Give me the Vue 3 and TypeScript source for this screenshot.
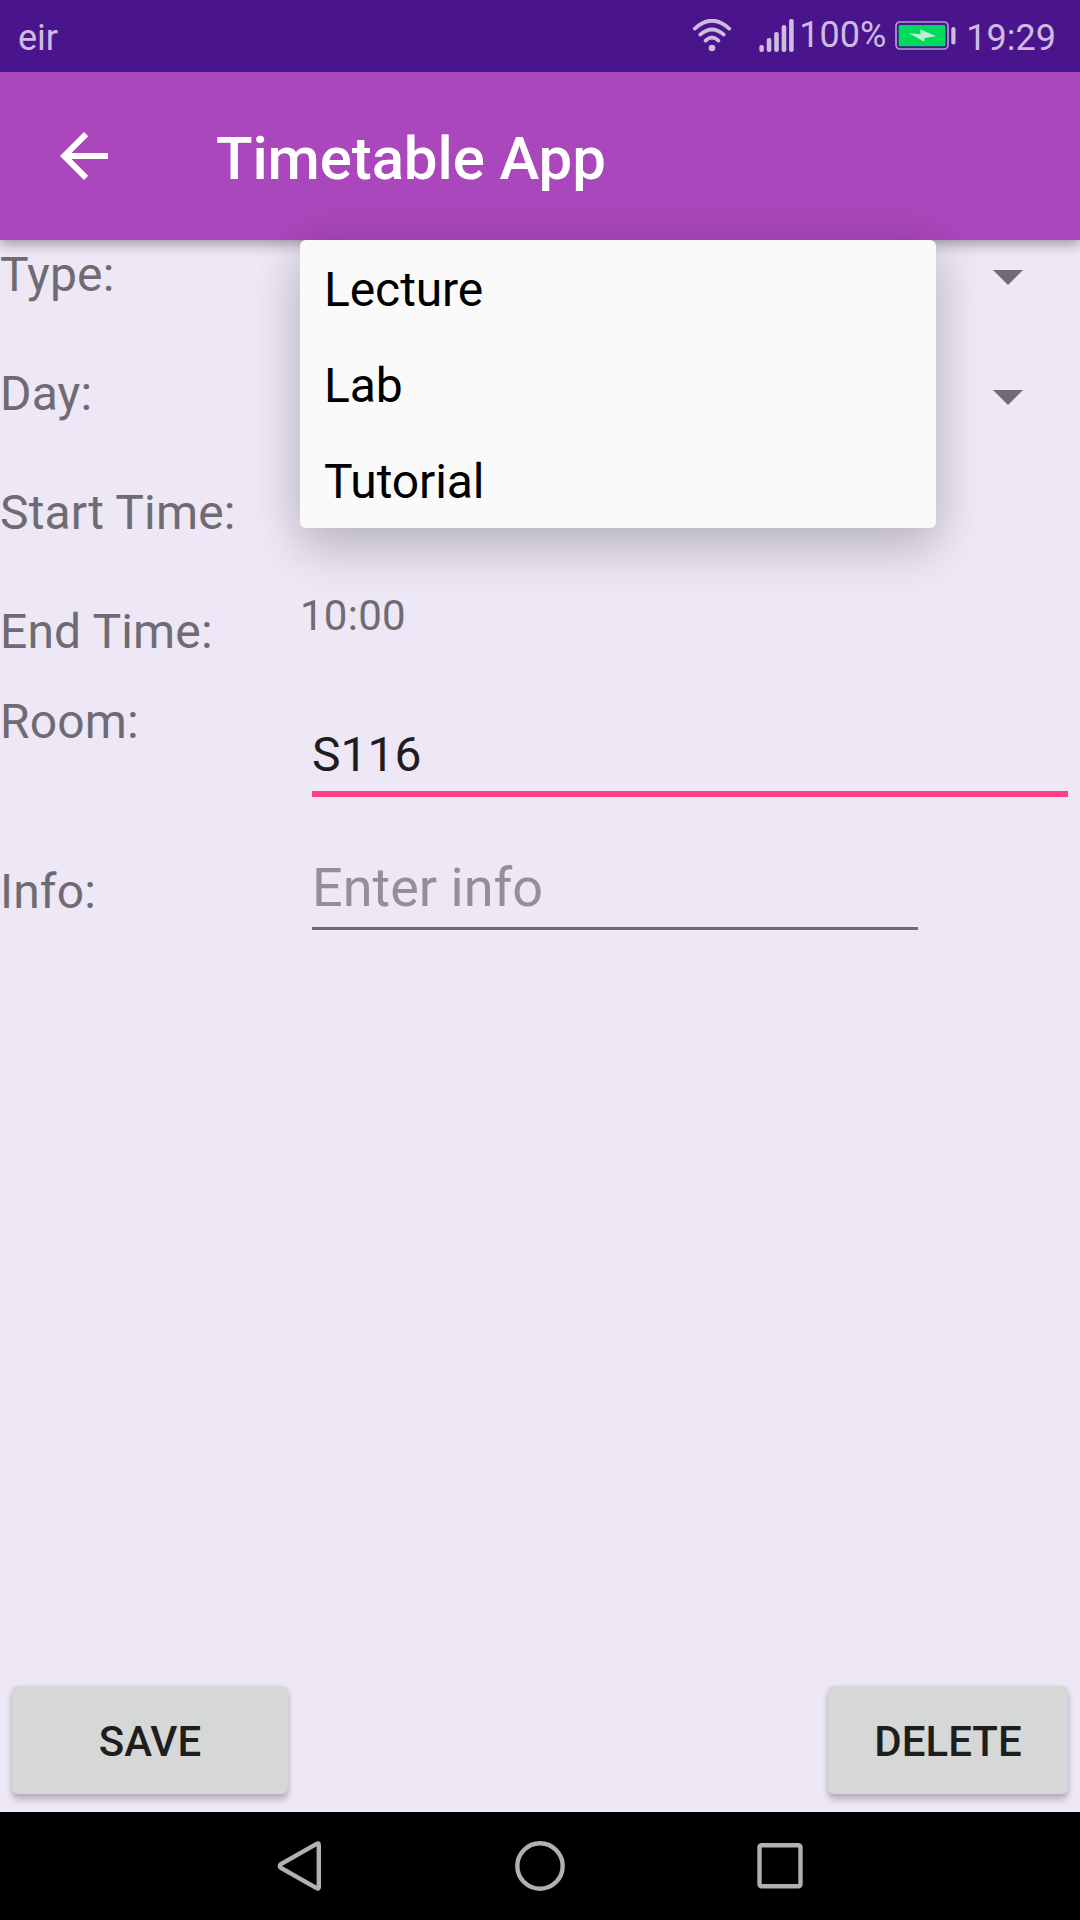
<script setup lang="ts">
import { ref } from 'vue'

interface Field {
  label: string
  height: number
}

const fields: Field[] = [
  { label: 'Type:', height: 119 },
  { label: 'Day:', height: 119 },
  { label: 'Start Time:', height: 119 },
  { label: 'End Time:', height: 90 },
  { label: 'Room:', height: 170 },
  { label: 'Info:', height: 56 },
]

const types: string[] = ['Lecture', 'Lab', 'Tutorial']
const signalBars: number[] = [7, 14, 20, 27, 33]
const menuOpen = ref(true)
const room = ref('S116')
const info = ref('')
</script>

<template>
  <div class="screen">
    <header class="status">
      <span class="carrier">eir</span>
      <div class="indicators">
        <svg class="wifi" width="40" height="34" viewBox="0 0 40 34" fill="none" stroke="currentColor" stroke-width="3.8" stroke-linecap="round">
          <path d="M2.8 9.6Q20 -6.2 37.2 9.6" />
          <path d="M8.2 15.6Q20 5.2 31.8 15.6" />
          <path d="M13.6 21.6Q20 15.6 26.4 21.6" />
          <circle cx="20" cy="29" r="3.3" fill="currentColor" stroke="none" />
        </svg>
        <svg class="signal" width="35" height="33" viewBox="0 0 35 33" fill="currentColor">
          <rect v-for="(h, i) in signalBars" :key="h" :x="i * 7.45 + 0.3" :y="33 - h" width="4.6" :height="h" rx="2" />
        </svg>
        <span class="percent">100%</span>
        <svg class="battery" width="62" height="30" viewBox="0 0 62 30">
          <rect x="1" y="1" width="52" height="27" rx="4" fill="none" stroke="#b09ad0" stroke-width="1.7" />
          <rect x="3.7" y="3.9" width="46.8" height="21.4" rx="1.5" fill="#00db5b" />
          <path d="M14 12.2L25.6 13.2L25.2 8.2L41 15.2L29.8 16.9L29.2 20.8Z" fill="#b9f4cf" />
          <rect x="56.3" y="6" width="4.2" height="17.5" rx="2" fill="#cdbce0" />
        </svg>
        <span class="clock">19:29</span>
      </div>
    </header>

    <div class="toolbar">
      <svg class="back" width="72" height="72" viewBox="0 0 24 24" fill="#fff">
        <path d="M20 11H7.83l5.59-5.59L12 4l-8 8 8 8 1.41-1.41L7.83 13H20v-2z" />
      </svg>
      <h1>Timetable App</h1>
    </div>

    <main class="content">
      <div class="labels">
        <div v-for="f in fields" :key="f.label" :style="{ height: f.height + 'px' }">{{ f.label }}</div>
      </div>
      <div class="values">
        <div class="spinner"><i class="arrow"></i></div>
        <div class="spinner"><i class="arrow"></i></div>
        <div class="time">10:00</div>
        <input v-model="room" class="room" type="text" />
        <input v-model="info" class="info" type="text" placeholder="Enter info" />
      </div>
      <ul v-if="menuOpen" class="menu">
        <li v-for="t in types" :key="t">{{ t }}</li>
      </ul>
    </main>

    <div class="actions">
      <button class="save">SAVE</button>
      <button class="delete">DELETE</button>
    </div>

    <nav class="navbar">
      <svg width="50" height="54" viewBox="0 0 50 54"><path d="M41.6 4.9Q43.8 3.6 43.8 6V48Q43.8 50.4 41.6 49.1L6 29Q3.6 27 6 25Z" /></svg>
      <svg width="54" height="54" viewBox="0 0 54 54"><circle cx="27" cy="27" r="22.7" /></svg>
      <svg width="50" height="54" viewBox="0 0 50 54"><rect x="4.5" y="6.3" width="41" height="41" rx="2" /></svg>
    </nav>
  </div>
</template>

<style>
body {
  margin: 0;
}
</style>

<style scoped>
.screen {
  width: 1080px;
  height: 1920px;
  display: flex;
  flex-direction: column;
  overflow: hidden;
  background: #ede7f6;
  font-family: Roboto, "Liberation Sans", sans-serif;
}
.status {
  position: relative;
  z-index: 1;
  height: 72px;
  flex: none;
  display: flex;
  justify-content: space-between;
  background: #4a148c;
  color: #cdbce0;
  font-size: 36px;
  line-height: 42px;
}
.carrier {
  margin: 17px 0 0 18px;
}
.indicators {
  display: flex;
  align-items: flex-start;
  margin-right: 24px;
}
.wifi {
  margin: 19px 27px 0 0;
}
.signal {
  margin: 19px 5px 0 0;
}
.percent {
  margin: 14px 9px 0 0;
  width: 87px;
}
.battery {
  margin: 21px 9px 0 0;
}
.clock {
  margin-top: 17px;
}
.toolbar {
  position: relative;
  height: 168px;
  flex: none;
  display: flex;
  align-items: center;
  background: #ab47bc;
  box-shadow: 0 5px 12px rgba(0, 0, 0, 0.3), 0 0 4px rgba(0, 0, 0, 0.08);
}
.back {
  margin-left: 48px;
}
h1 {
  margin: 5px 0 0 96px;
  color: #fff;
  font-size: 60px;
  font-weight: 500;
  line-height: 70px;
  letter-spacing: -0.12px;
}
.content {
  position: relative;
  flex: 1;
  display: flex;
}
.labels {
  width: 300px;
  padding-top: 7px;
  color: #6f6b73;
  font-size: 48px;
  line-height: 56px;
  letter-spacing: 0.15px;
}
.values {
  flex: 1;
  display: flex;
  flex-direction: column;
  align-items: flex-start;
}
.spinner {
  width: 100%;
  height: 120px;
  display: flex;
  justify-content: flex-end;
}
.arrow {
  width: 30px;
  height: 15px;
  margin: 30px 57px 0 0;
  background: #6f6b73;
  clip-path: polygon(0 0, 100% 0, 50% 100%);
}
.time {
  margin-top: 111px;
  height: 49px;
  color: #6f6b73;
  font-size: 42px;
  line-height: 49px;
  letter-spacing: 0.25px;
}
input {
  display: block;
  box-sizing: border-box;
  margin: 0 0 0 12px;
  padding: 0;
  border: 0;
  border-radius: 0;
  outline: none;
  background: transparent;
  font-family: inherit;
}
.room {
  width: 756px;
  height: 76px;
  margin-top: 81px;
  padding-bottom: 4px;
  border-bottom: 6px solid #ff4081;
  color: #1f1d20;
  font-size: 48px;
}
.info {
  width: 606px;
  height: 82px;
  margin-top: 51px;
  padding-bottom: 1px;
  border-bottom: 3px solid #6f6b73;
  color: #1f1d20;
  font-size: 54px;
}
.info::placeholder {
  color: #938f99;
  opacity: 1;
}
.menu {
  position: absolute;
  left: 300px;
  top: 0;
  width: 636px;
  height: 288px;
  box-sizing: border-box;
  margin: 0;
  padding: 2px 24px 0;
  list-style: none;
  border-radius: 6px;
  background: #fafafa;
  box-shadow: 0 24px 50px rgba(0, 0, 0, 0.16), 0 0 48px rgba(0, 0, 0, 0.11);
  color: #000;
  font-size: 48px;
  letter-spacing: -0.1px;
}
.menu li {
  height: 96px;
  line-height: 96px;
}
.actions {
  display: flex;
  justify-content: space-between;
  padding: 0 12px 18px;
}
button {
  height: 108px;
  padding: 2px 0 0;
  border: 0;
  border-radius: 6px;
  background: #d6d7d7;
  box-shadow: 0 6px 7px rgba(0, 0, 0, 0.2), 0 1px 5px rgba(0, 0, 0, 0.1);
  color: #1e1e1e;
  font-family: inherit;
  font-size: 42px;
  font-weight: 500;
}
.save {
  width: 276px;
}
.delete {
  width: 240px;
}
.navbar {
  height: 108px;
  flex: none;
  display: flex;
  align-items: center;
  justify-content: center;
  gap: 188px;
  background: #000;
}
.navbar svg {
  fill: none;
  stroke: #b1b1b1;
  stroke-width: 4.4;
}
</style>
